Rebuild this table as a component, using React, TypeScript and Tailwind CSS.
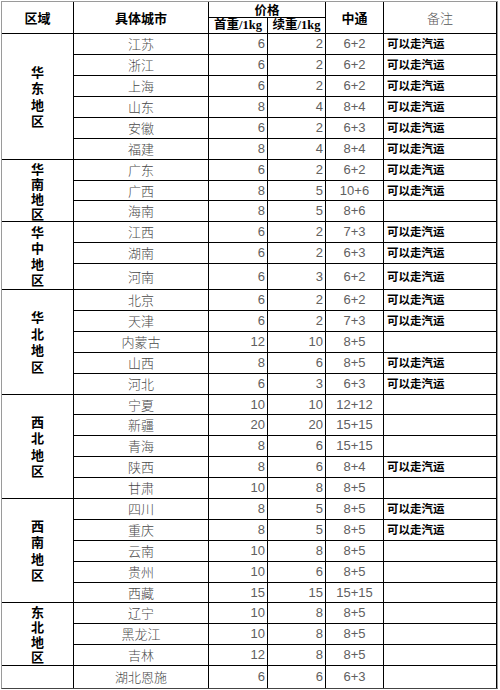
type Row = {
  city: string;
  first: string;
  next: string;
  zt: string;
  truck?: boolean;
};

type Region = {
  name: string;
  span: string;
  leading: string;
  rows: Row[];
};

const regions: Region[] = [
  {
    name: "华东地区",
    span: "row-span-6",
    leading: "leading-[16.5px]",
    rows: [
      { city: "江苏", first: "6", next: "2", zt: "6+2", truck: true },
      { city: "浙江", first: "6", next: "2", zt: "6+2", truck: true },
      { city: "上海", first: "6", next: "2", zt: "6+2", truck: true },
      { city: "山东", first: "8", next: "4", zt: "8+4", truck: true },
      { city: "安徽", first: "6", next: "2", zt: "6+3", truck: true },
      { city: "福建", first: "8", next: "4", zt: "8+4", truck: true },
    ],
  },
  {
    name: "华南地区",
    span: "row-span-3",
    leading: "leading-[15px]",
    rows: [
      { city: "广东", first: "6", next: "2", zt: "6+2", truck: true },
      { city: "广西", first: "8", next: "5", zt: "10+6", truck: true },
      { city: "海南", first: "8", next: "5", zt: "8+6" },
    ],
  },
  {
    name: "华中地区",
    span: "row-span-3",
    leading: "leading-[16px]",
    rows: [
      { city: "江西", first: "6", next: "2", zt: "7+3", truck: true },
      { city: "湖南", first: "6", next: "2", zt: "6+3", truck: true },
      { city: "河南", first: "6", next: "3", zt: "6+2", truck: true },
    ],
  },
  {
    name: "华北地区",
    span: "row-span-5",
    leading: "leading-[16.5px]",
    rows: [
      { city: "北京", first: "6", next: "2", zt: "6+2", truck: true },
      { city: "天津", first: "6", next: "2", zt: "7+3", truck: true },
      { city: "内蒙古", first: "12", next: "10", zt: "8+5" },
      { city: "山西", first: "8", next: "6", zt: "8+5", truck: true },
      { city: "河北", first: "6", next: "3", zt: "6+3", truck: true },
    ],
  },
  {
    name: "西北地区",
    span: "row-span-5",
    leading: "leading-[16.5px]",
    rows: [
      { city: "宁夏", first: "10", next: "10", zt: "12+12" },
      { city: "新疆", first: "20", next: "20", zt: "15+15" },
      { city: "青海", first: "8", next: "6", zt: "15+15" },
      { city: "陕西", first: "8", next: "6", zt: "8+4", truck: true },
      { city: "甘肃", first: "10", next: "8", zt: "8+5" },
    ],
  },
  {
    name: "西南地区",
    span: "row-span-5",
    leading: "leading-[16.5px]",
    rows: [
      { city: "四川", first: "8", next: "5", zt: "8+5", truck: true },
      { city: "重庆", first: "8", next: "5", zt: "8+5", truck: true },
      { city: "云南", first: "10", next: "8", zt: "8+5" },
      { city: "贵州", first: "10", next: "6", zt: "8+5" },
      { city: "西藏", first: "15", next: "15", zt: "15+15" },
    ],
  },
  {
    name: "东北地区",
    span: "row-span-3",
    leading: "leading-[15px]",
    rows: [
      { city: "辽宁", first: "10", next: "8", zt: "8+5" },
      { city: "黑龙江", first: "10", next: "8", zt: "8+5" },
      { city: "吉林", first: "12", next: "8", zt: "8+5" },
    ],
  },
  {
    name: "",
    span: "row-span-1",
    leading: "leading-[16px]",
    rows: [{ city: "湖北恩施", first: "6", next: "6", zt: "6+3" }],
  },
];

const cjk = "font-['Noto_Sans_CJK_SC',sans-serif]";
const cell = "bg-white flex items-center overflow-hidden";

export default function App() {
  return (
    <div className="w-[500px] h-[690px] bg-white">
      <div className="ml-[1px] mt-[1px] w-[497px] border border-[#9a9a9a] border-b-[#444]">
        <div className="grid bg-black gap-px grid-cols-[71px_134px_58px_57px_57px_112px] grid-rows-[15px_15px_20px_20px_20px_20px_20px_20px_20px_19px_20px_20px_20px_25px_20px_20px_20px_20px_20px_19px_20px_20px_20px_20px_20px_20px_20px_20px_19px_20px_20px_20px_22px]">
          <div className={`${cell} row-span-2 justify-center ${cjk} font-bold text-[13px] text-black`}>
            区域
          </div>
          <div className={`${cell} row-span-2 justify-center ${cjk} font-bold text-[13px] text-black`}>
            具体城市
          </div>
          <div className={`bg-white flex items-center col-span-2 justify-center ${cjk} font-bold text-[12.5px] leading-[14px] text-black`}>
            价格
          </div>
          <div className={`${cell} row-span-2 justify-center ${cjk} font-bold text-[13px] text-black`}>
            中通
          </div>
          <div className={`${cell} row-span-2 justify-center ${cjk} font-light text-[13px] text-[#555]`}>
            备注
          </div>
          <div className={`${cell} justify-center font-['Liberation_Serif','Noto_Sans_CJK_SC',serif] font-bold text-[12.5px] leading-[15px] text-black`}>
            首重/1kg
          </div>
          <div className={`${cell} justify-center font-['Liberation_Serif','Noto_Sans_CJK_SC',serif] font-bold text-[12.5px] leading-[15px] text-black`}>
            续重/1kg
          </div>

          {regions.map((region, ri) => (
            <>
              <div
                key={`r${ri}`}
                className={`${cell} ${region.span} justify-center ${cjk} font-bold text-[13px] ${region.leading} text-black text-center`}
              >
                <div className="w-[14px]">{region.name}</div>
              </div>
              {region.rows.map((row) => (
                <>
                  <div key={`${row.city}c`} className={`${cell} justify-center ${cjk} font-light text-[13px] text-[#484848]`}>
                    {row.city}
                  </div>
                  <div key={`${row.city}f`} className={`${cell} justify-end pr-[2px] font-['Liberation_Sans',sans-serif] text-[13px] text-[#606060]`}>
                    {row.first}
                  </div>
                  <div key={`${row.city}n`} className={`${cell} justify-end pr-[2px] font-['Liberation_Sans',sans-serif] text-[13px] text-[#606060]`}>
                    {row.next}
                  </div>
                  <div key={`${row.city}z`} className={`${cell} justify-center font-['Liberation_Sans',sans-serif] text-[13px] text-[#606060]`}>
                    {row.zt}
                  </div>
                  <div key={`${row.city}t`} className={`${cell} pl-[3px] ${cjk} font-bold text-[11.5px] text-black`}>
                    {row.truck ? "可以走汽运" : ""}
                  </div>
                </>
              ))}
            </>
          ))}
        </div>
      </div>
    </div>
  );
}
